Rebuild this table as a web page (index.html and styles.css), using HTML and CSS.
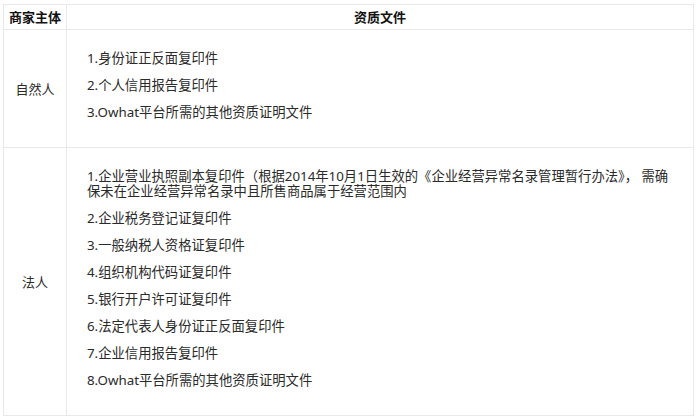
FILE: index.html
```html
<!DOCTYPE html>
<html lang="zh-CN">
<head>
<meta charset="utf-8">
<title>资质文件</title>
<link rel="stylesheet" href="styles.css">
</head>
<body>
<table class="qual-table">
  <thead>
    <tr>
      <th class="col-subject">商家主体</th>
      <th class="col-docs">资质文件</th>
    </tr>
  </thead>
  <tbody>
    <tr>
      <td class="subject">自然人</td>
      <td class="docs">
        <p>1.身份证正反面复印件</p>
        <p>2.个人信用报告复印件</p>
        <p>3.Owhat平台所需的其他资质证明文件</p>
      </td>
    </tr>
    <tr>
      <td class="subject">法人</td>
      <td class="docs">
        <p>1.企业营业执照副本复印件（根据2014年10月1日生效的《企业经营异常名录管理暂行办法》， 需确保未在企业经营异常名录中且所售商品属于经营范围内</p>
        <p>2.企业税务登记证复印件</p>
        <p>3.一般纳税人资格证复印件</p>
        <p>4.组织机构代码证复印件</p>
        <p>5.银行开户许可证复印件</p>
        <p>6.法定代表人身份证正反面复印件</p>
        <p>7.企业信用报告复印件</p>
        <p>8.Owhat平台所需的其他资质证明文件</p>
      </td>
    </tr>
  </tbody>
</table>
</body>
</html>
```
FILE: styles.css
```css
html, body {
  margin: 0;
  padding: 0;
  background: #ffffff;
}

body {
  font-family: "Noto Sans", "Noto Sans CJK SC", sans-serif;
  color: #2a2a2a;
}

.qual-table {
  margin: 4px 0 0 3px;
  width: 691px;
  border-collapse: collapse;
  table-layout: fixed;
}

.qual-table th,
.qual-table td {
  border: 1px solid #e8e8e8;
  padding: 0;
}

.qual-table th {
  height: 24px;
  font-size: 13px;
  font-weight: bold;
  color: #111111;
  text-align: center;
  vertical-align: middle;
  line-height: 16px;
}

.col-subject {
  width: 62px;
}

.subject {
  font-size: 13px;
  line-height: 16px;
  text-align: center;
  vertical-align: middle;
  color: #2a2a2a;
}

.docs {
  padding: 9px 20px 15px 20px !important;
  font-size: 13.33px;
  line-height: 15px;
  vertical-align: top;
}

.docs p {
  margin: 12px 0;
}
```
